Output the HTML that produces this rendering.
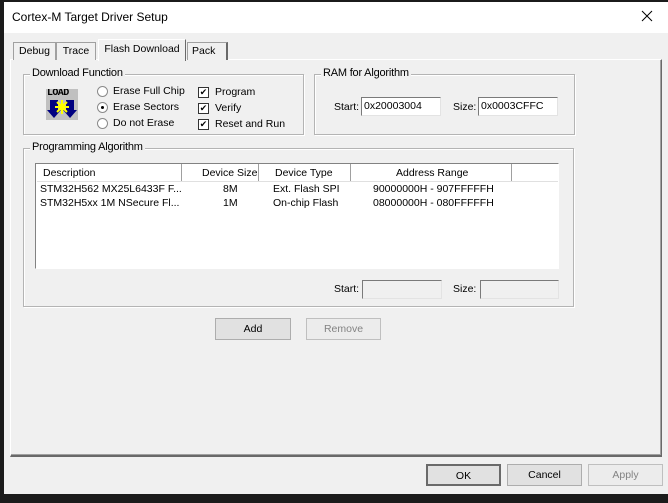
<html><head><style>
body{margin:0;width:668px;height:503px;background:#1b1b1b;position:relative;overflow:hidden;font-family:"Liberation Sans",sans-serif;font-size:10.5px;color:#000}
.a{position:absolute;white-space:nowrap}
.win{left:4px;top:2px;width:664px;height:492px;background:#f0f0f0}
.title{left:4px;top:2px;width:664px;height:31px;background:#fff}
.grp{position:absolute;border:1px solid #b4b4b4;box-shadow:inset 1px 1px 0 #fff,1px 1px 0 #fff}
.grp>span{position:absolute;top:-8px;left:6px;background:#f0f0f0;padding:0 2px;font-size:11px;letter-spacing:-0.2px}
.in{position:absolute;height:17px;background:#fff;border:1px solid #7a7a7a;border-right-color:#e3e3e3;border-bottom-color:#e3e3e3;box-sizing:border-box;padding:2px 2px;line-height:12px}
.btn{position:absolute;height:22px;box-sizing:border-box;background:#e1e1e1;border:1px solid #adadad;text-align:center;line-height:20px}
.tab{position:absolute;top:42px;height:18px;border:1px solid #a0a0a0;border-bottom:none;box-sizing:border-box;text-align:center;line-height:16px;background:#f0f0f0}
.rad{position:absolute;width:11px;height:11px;border-radius:50%;border:1px solid #8a8a8a;background:#fff;box-sizing:border-box}
.chk{position:absolute;width:11px;height:11px;border:1px solid #333;background:#fff;box-sizing:border-box;font-size:9px;line-height:9px;text-align:center}
</style></head><body>
<div class="a win"></div>
<div class="a title"></div>
<div class="a" style="left:12px;top:10px;font-size:12px">Cortex-M Target Driver Setup</div>
<svg class="a" style="left:641px;top:10px" width="12" height="12"><path d="M1 1L11 11M11 1L1 11" stroke="#000" stroke-width="1"/></svg>
<div class="a" style="left:10px;top:59px;width:652px;height:398px;border:1px solid #fff;border-right-color:#696969;border-bottom:2px solid #696969;box-sizing:border-box;box-shadow:inset -1px -1px 0 #a0a0a0"></div>
<div class="tab" style="left:13px;width:43px">Debug</div>
<div class="tab" style="left:56px;width:40px">Trace</div>
<div class="tab" style="left:98px;top:39px;height:22px;width:88px;border-color:#fff #696969 #f0f0f0 #fff;line-height:18px">Flash Download</div>
<div class="tab" style="left:187px;width:41px;border-right:2px solid #696969;text-align:left;padding-left:4px">Pack</div>

<div class="grp" style="left:23px;top:74px;width:279px;height:59px"><span>Download Function</span></div>
<div class="a" style="left:46px;top:89px;width:32px;height:31px;background:#c0c0c0;overflow:hidden">
<div class="a" style="left:1px;top:-1px;font:bold 10px 'Liberation Mono',monospace;letter-spacing:-0.6px">LOAD</div>
<svg class="a" style="left:0;top:0" width="32" height="31"><path d="M4 11h8v10h3l-7 8-7-8h3z" fill="#000080"/><path d="M20 11h8v10h3l-7 8-7-8h3z" fill="#000080"/><path d="M16 11v14M9 18h14M11 13l10 10M21 13l-10 10" stroke="#ff0" stroke-width="2"/><circle cx="16" cy="18" r="3.5" fill="#ff0"/></svg>
</div>
<div class="rad" style="left:97px;top:86px"></div><div class="a" style="left:113px;top:85px">Erase Full Chip</div>
<div class="rad" style="left:97px;top:102px"><div class="a" style="left:3px;top:3px;width:3px;height:3px;border-radius:50%;background:#000"></div></div><div class="a" style="left:113px;top:101px">Erase Sectors</div>
<div class="rad" style="left:97px;top:118px"></div><div class="a" style="left:113px;top:117px">Do not Erase</div>
<div class="chk" style="left:198px;top:87px">✔</div><div class="a" style="left:215px;top:86px">Program</div>
<div class="chk" style="left:198px;top:103px">✔</div><div class="a" style="left:215px;top:102px">Verify</div>
<div class="chk" style="left:198px;top:119px">✔</div><div class="a" style="left:215px;top:118px">Reset and Run</div>

<div class="grp" style="left:314px;top:74px;width:259px;height:59px"><span>RAM for Algorithm</span></div>
<div class="a" style="left:334px;top:101px">Start:</div>
<div class="in" style="left:361px;top:97px;width:80px;height:19px">0x20003004</div>
<div class="a" style="left:453px;top:101px">Size:</div>
<div class="in" style="left:478px;top:97px;width:80px;height:19px">0x0003CFFC</div>

<div class="grp" style="left:23px;top:148px;width:549px;height:157px"><span>Programming Algorithm</span></div>
<div class="a" style="left:35px;top:163px;width:524px;height:106px;background:#fff;border:1px solid #828282;border-right-color:#fff;border-bottom-color:#fff;box-sizing:border-box"></div>
<div class="a" style="left:37px;top:164px;width:521px;height:17px;background:#fff;border-bottom:1px solid #e0e0e0"></div>
<div class="a" style="left:43px;top:167px">Description</div>
<div class="a" style="left:181px;top:164px;width:1px;height:17px;background:#a0a0a0"></div>
<div class="a" style="left:202px;top:167px">Device Size</div>
<div class="a" style="left:258px;top:164px;width:1px;height:17px;background:#a0a0a0"></div>
<div class="a" style="left:275px;top:167px">Device Type</div>
<div class="a" style="left:350px;top:164px;width:1px;height:17px;background:#a0a0a0"></div>
<div class="a" style="left:396px;top:167px">Address Range</div>
<div class="a" style="left:511px;top:164px;width:1px;height:17px;background:#a0a0a0"></div>
<div class="a" style="left:40px;top:183px">STM32H562 MX25L6433F F...</div>
<div class="a" style="left:223px;top:183px">8M</div>
<div class="a" style="left:273px;top:183px">Ext. Flash SPI</div>
<div class="a" style="left:373px;top:183px">90000000H - 907FFFFFH</div>
<div class="a" style="left:40px;top:197px">STM32H5xx 1M NSecure Fl...</div>
<div class="a" style="left:223px;top:197px">1M</div>
<div class="a" style="left:273px;top:197px">On-chip Flash</div>
<div class="a" style="left:373px;top:197px">08000000H - 080FFFFFH</div>
<div class="a" style="left:334px;top:283px">Start:</div>
<div class="in" style="left:362px;top:280px;width:80px;height:19px;background:#f0f0f0"></div>
<div class="a" style="left:453px;top:283px">Size:</div>
<div class="in" style="left:480px;top:280px;width:79px;height:19px;background:#f0f0f0"></div>

<div class="btn" style="left:215px;top:318px;width:76px">Add</div>
<div class="btn" style="left:306px;top:318px;width:75px;color:#838383;border-color:#bfbfbf;background:#ececec">Remove</div>
<div class="btn" style="left:426px;top:464px;width:75px;border:2px solid #6a6a6a">OK</div>
<div class="btn" style="left:507px;top:464px;width:75px">Cancel</div>
<div class="btn" style="left:588px;top:464px;width:75px;color:#838383;border-color:#bfbfbf;background:#ececec">Apply</div>
</body></html>
